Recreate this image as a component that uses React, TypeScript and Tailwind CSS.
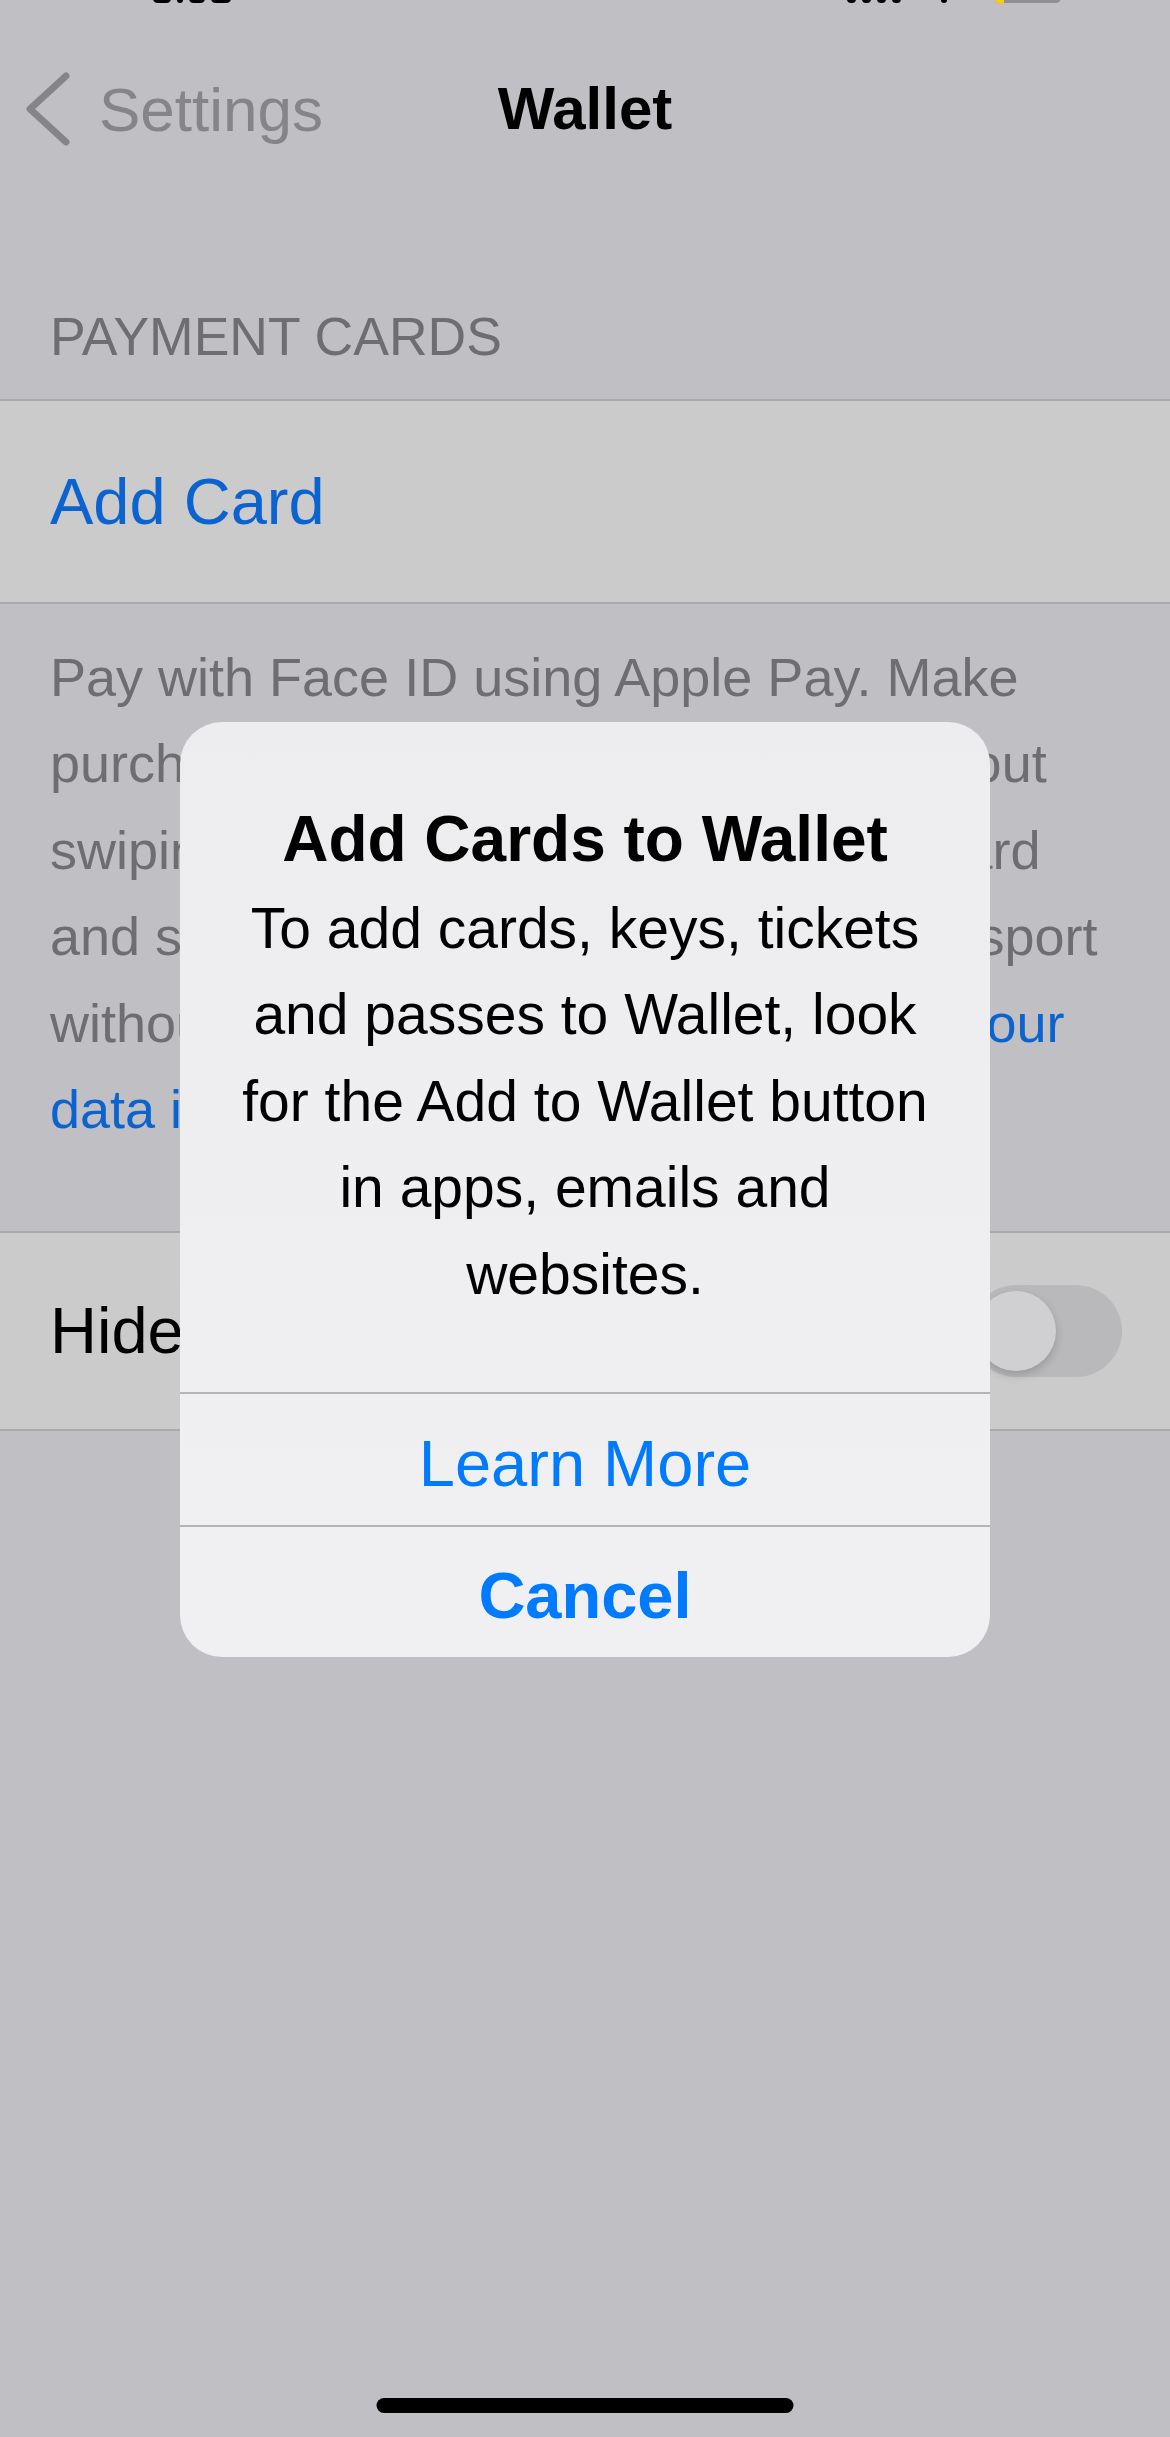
import React from 'react';

// Settings › Wallet screen with the "Add Cards to Wallet" alert on top
function StatusBarSliver() {
  return (
    <div className="absolute top-0 left-0 right-0 h-[4px] overflow-hidden">
      <div className="flex items-start">
        <div className="ml-[153px] mt-[-6px] flex gap-[6px]">
          <div className="w-[18px] h-[9px] rounded-full bg-black" />
          <div className="w-[6px] h-[9px] rounded-full bg-black" />
          <div className="w-[16px] h-[9px] rounded-full bg-black" />
          <div className="w-[20px] h-[9px] rounded-full bg-black" />
        </div>
        <div className="ml-[616px] mt-[-6px] flex gap-[6px]">
          <div className="w-[9px] h-[9px] rounded-sm bg-black" />
          <div className="w-[9px] h-[9px] rounded-sm bg-black" />
          <div className="w-[9px] h-[9px] rounded-sm bg-black" />
          <div className="w-[9px] h-[9px] rounded-sm bg-black" />
        </div>
        <div className="ml-[40px] mt-[-6px] w-[6px] h-[9px] rounded-full bg-black" />
        <div className="ml-[47px] mt-[-8px] w-[67px] h-[11px] rounded-[6px] bg-[#8e8e93] flex">
          <div className="w-[10px] h-full rounded-l-[6px] bg-[#ffcc00]" />
        </div>
      </div>
    </div>
  );
}

function BackChevron() {
  return (
    <svg width="48" height="76" viewBox="0 0 48 76" fill="none">
      <polyline
        points="42,5 6,38 42,71"
        stroke="#858589"
        strokeWidth="7"
        strokeLinecap="round"
        strokeLinejoin="round"
      />
    </svg>
  );
}

function AddCardsAlert() {
  return (
    <div className="absolute top-[722px] left-[180px] w-[810px] rounded-[42px] bg-gradient-to-b from-[#ededef] to-[#f0f0f2] overflow-hidden text-center">
      <div className="h-[670px] pt-[77px] px-[30px]">
        <h2 className="text-[64px] leading-[80px] font-bold text-black">Add Cards to Wallet</h2>
        <p className="mt-[6px] text-[57px] leading-[86.4px] text-black">
          To add cards, keys, tickets
          <br />
          and passes to Wallet, look
          <br />
          for the Add to Wallet button
          <br />
          in apps, emails and
          <br />
          websites.
        </p>
      </div>
      <div className="h-[2px] bg-[#b4b4b7]" />
      <button className="w-full h-[131px] pt-[8px] flex items-center justify-center text-[65px] text-[#007aff]">
        Learn More
      </button>
      <div className="h-[2px] bg-[#b4b4b7]" />
      <button className="w-full h-[130px] pt-[8px] flex items-center justify-center text-[65px] font-bold text-[#007aff]">
        Cancel
      </button>
    </div>
  );
}

export default function App() {
  return (
    <div className="relative w-[1170px] h-[2437px] overflow-hidden bg-[#c0bfc4] font-['Liberation_Sans',Arial,sans-serif]">
      <StatusBarSliver />

      {/* Navigation bar */}
      <div className="h-[218px] grid grid-cols-[1fr_auto_1fr] items-center">
        <div className="flex items-center pl-[24px]">
          <BackChevron />
          <span className="ml-[27px] text-[62px] text-[#858589]">Settings</span>
        </div>
        <h1 className="text-[60px] font-bold text-black">Wallet</h1>
        <div />
      </div>

      {/* Payment cards group */}
      <div className="h-[181px] flex items-end pb-[31px] px-[50px]">
        <span className="text-[53.5px] leading-[62px] text-[#6d6d72]">PAYMENT CARDS</span>
      </div>
      <div className="border-y-2 border-[#a9a9ac] bg-[#cbcbcc]">
        <div className="h-[201px] flex items-center px-[50px]">
          <span className="text-[65px] text-[#0a63ce]">Add Card</span>
        </div>
      </div>

      <div className="h-[627px] pt-[30px] px-[50px]">
        <p className="text-[54px] leading-[86.4px] text-[#6d6d72] whitespace-nowrap">
          Pay with Face ID using Apple Pay. Make
          <br />
          purchases in app and on the web, without
          <br />
          swiping your card. Add your rewards card
          <br />
          and store your boarding passes or transport
          <br />
          without your physical wallet. <span className="text-[#0a63ce]">See how your</span>
          <br />
          <span className="text-[#0a63ce]">data is managed…</span>
        </p>
      </div>

      {/* Expired passes toggle */}
      <div className="border-y-2 border-[#a9a9ac] bg-[#cbcbcc]">
        <div className="h-[196px] flex items-center justify-between pl-[50px] pr-[48px]">
          <span className="text-[65px] text-black">Hide Expired Passes</span>
          <div className="w-[152px] h-[92px] rounded-full bg-[#b9b9bc] flex items-center">
            <div className="ml-[6px] w-[80px] h-[80px] rounded-full bg-[#d0d0d2] shadow-[0_4px_10px_rgba(0,0,0,0.18)]" />
          </div>
        </div>
      </div>

      <AddCardsAlert />

      {/* Home indicator */}
      <div className="absolute bottom-[24px] left-1/2 -translate-x-1/2 w-[417px] h-[15px] rounded-full bg-black" />
    </div>
  );
}
